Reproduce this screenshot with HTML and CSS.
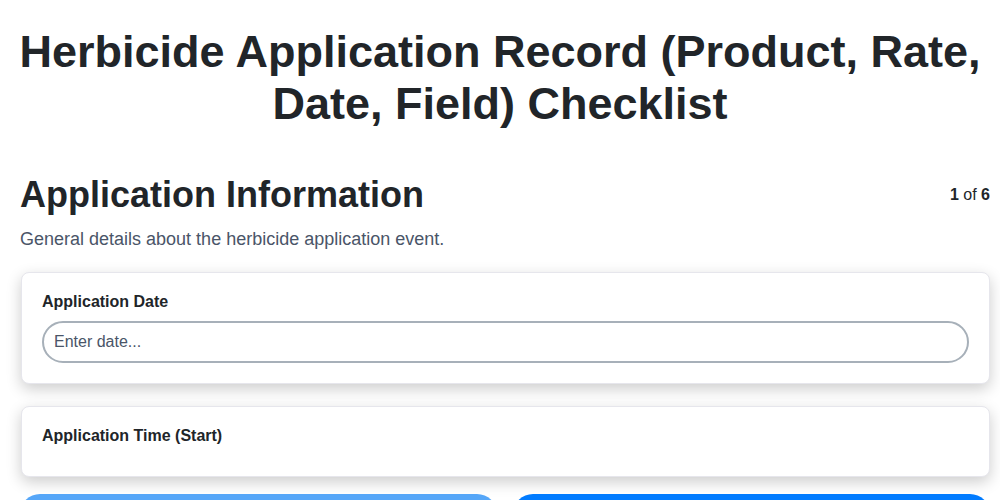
FILE: index.html
```html
<!DOCTYPE html>
<html lang="en">
<head>
	<meta charset="UTF-8">
	<title>Herbicide Application Record (Product, Rate, Date, Field) Checklist</title>
	<link rel="stylesheet" href="styles.css">
</head>
<body>
	<div class="page">
		<h1>Herbicide Application Record (Product, Rate, Date, Field) Checklist</h1>
		<div class="section-head">
			<h2>Application Information</h2>
			<div class="step"><b>1</b> of <b>6</b></div>
		</div>
		<p class="desc">General details about the herbicide application event.</p>
		<div class="fields">
			<div class="card">
				<label for="app-date">Application Date</label>
				<input type="text" id="app-date" placeholder="Enter date...">
			</div>
			<div class="card">
				<label>Application Time (Start)</label>
				<div class="field-empty"></div>
			</div>
		</div>
		<div class="nav">
			<button class="btn prev" disabled>Previous</button>
			<button class="btn next">Next</button>
		</div>
	</div>
</body>
</html>
```

FILE: styles.css
```css
*{margin:0;padding:0;box-sizing:border-box;}
body{background-color:#fff;font-family:"Liberation Sans",Arial,sans-serif;color:#212529;}
.page{padding:0 10px 0 20px;}
/*大标题*/
h1{text-align:center;font-size:45px;line-height:52px;font-weight:bold;padding:26px 16px 0;margin:0 -10px 43px -20px;}
.section-head{display:flex;justify-content:space-between;align-items:center;}
h2{font-size:36px;line-height:43px;font-weight:bold;}
.step{font-size:16px;}
.desc{font-size:18px;color:#4a5568;margin-top:11px;margin-bottom:21px;line-height:24px;}

.fields{display:flex;flex-direction:column;gap:22px;}
.card{background-color:#fff;border:1px solid #e6e6ec;border-radius:8px;padding:19px 20px 20px;margin-left:1px;box-shadow:0 5px 15px rgba(0,0,0,0.2);}
.card label{display:block;font-size:16px;font-weight:bold;line-height:20px;margin-bottom:9px;}
.card input{display:block;width:100%;height:42px;border:2px solid #a7b0b9;border-radius:21px;padding:0 10px;font-size:16px;font-family:inherit;color:#212529;outline:none;}
.card input::placeholder{color:#4a5568;}
.field-empty{height:1px;}

.nav{display:flex;gap:16px;margin-top:17px;}
.btn{flex:1;height:44px;border:none;border-radius:20px;color:#fff;font-size:16px;font-family:inherit;}
.prev{background-color:#55a6f8;}
.next{background-color:#007bff;}
```
